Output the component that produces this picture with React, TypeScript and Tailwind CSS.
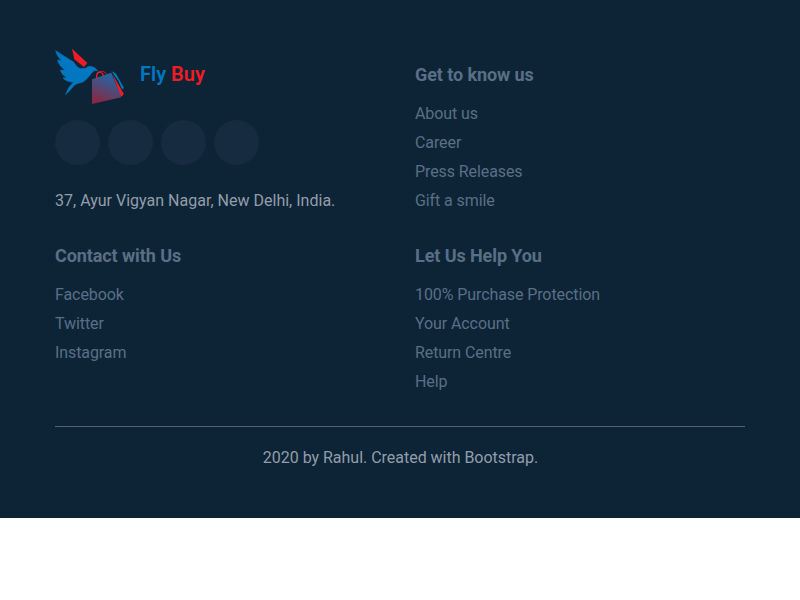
import React from "react";

function Logo() {
  return (
    <svg className="h-14 w-[70px] shrink-0" viewBox="15 15 210 168" aria-hidden="true">
      <defs>
        <linearGradient id="bag" x1="0.7" y1="0" x2="0.3" y2="1">
          <stop offset="0" stopColor="#1b6aac" />
          <stop offset="0.5" stopColor="#4f4a78" />
          <stop offset="1" stopColor="#8a2740" />
        </linearGradient>
      </defs>
      <path
        fill="#0077c0"
        stroke="#0077c0"
        strokeWidth="2"
        d="M17 20 L62 49 Q72 53 77 63 Q82 72 91 74 L107 73 Q113 67 122 67 Q133 68 143 80 Q133 77 127 84 L112 103 Q101 116 84 118 Q73 121 65 133 L47 152 Q54 129 71 114 Q51 115 39 102 L51 101 Q35 93 31 79 L45 79 Q24 61 23 48 L34 49 Q20 35 17 20 Z"
      />
      <path fill="#ee1c25" d="M66 14 L112 57 L102 69 L73 46 Z" />
      <path fill="#0077c0" d="M184 81 L198 89 L222 132 L216 136 L205 111 Z" />
      <path fill="#ee1c25" d="M188 91 L221 149 L217 157 L211 156 Z" />
      <path fill="none" stroke="#ee1c25" strokeWidth="2.5" d="M151 84 Q158 78 166 86 L173 93" />
      <path fill="url(#bag)" d="M126 106 L184 86 L214 160 L126 180 Z" />
      <path fill="none" stroke="#ee1c25" strokeWidth="4" d="M140 104 V94 Q142 83 151 84 Q159 87 161 96" />
    </svg>
  );
}

function LinkGroup({ title, links }: { title: string; links: string[] }) {
  return (
    <div>
      <h2 className="text-[18px] leading-[22px] font-bold tracking-[-0.09px]">{title}</h2>
      <ul className="mt-[13px]">
        {links.map((link) => (
          <li key={link} className="h-[29px] leading-[29px] tracking-[-0.09px]">
            <a href="#">{link}</a>
          </li>
        ))}
      </ul>
    </div>
  );
}

export default function App() {
  return (
    <footer className="h-[518px] bg-[#0d2436] px-[55px] pt-[49px] font-['Roboto',sans-serif] text-base text-[#5a6f86]">
      <div className="grid grid-cols-2 gap-x-[30px]">
        <div className="h-[196px]">
          <div className="flex h-14 items-center gap-[15px]">
            <Logo />
            <span className="-mt-1.5 text-[20px] leading-7 font-semibold text-[#ee1c25]">
              <span className="text-[#0077c0]">Fly</span> Buy
            </span>
          </div>
          <div className="mt-[15px] flex gap-2">
            {[0, 1, 2, 3].map((i) => (
              <a key={i} href="#" className="size-[45px] rounded-full bg-[#172b40]" />
            ))}
          </div>
          <p className="mt-6 leading-6 tracking-[0.01px] text-[#929dab]">37, Ayur Vigyan Nagar, New Delhi, India.</p>
        </div>
        <div className="pt-[15px]">
          <LinkGroup title="Get to know us" links={["About us", "Career", "Press Releases", "Gift a smile"]} />
        </div>
        <LinkGroup title="Contact with Us" links={["Facebook", "Twitter", "Instagram"]} />
        <LinkGroup title="Let Us Help You" links={["100% Purchase Protection", "Your Account", "Return Centre", "Help"]} />
      </div>
      <div className="mt-[30px] border-t border-[#526373] pt-[19px] pl-px text-center leading-6 tracking-[-0.02px] text-[#929dab]">
        2020 by Rahul. Created with Bootstrap.
      </div>
    </footer>
  );
}
